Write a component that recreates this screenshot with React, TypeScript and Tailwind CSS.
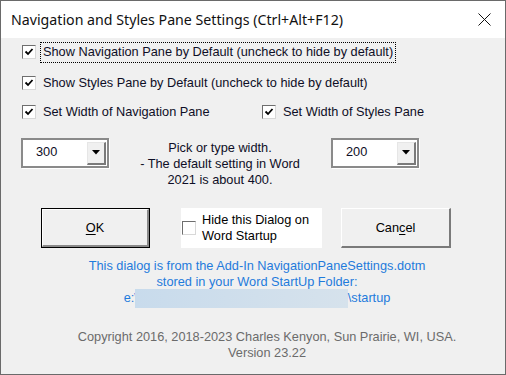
import type { ReactNode } from 'react'

const body = { fontFamily: '"Liberation Sans", Arial, sans-serif' }

function Box({ checked }: { checked?: boolean }) {
  return (
    <span className="inline-flex w-[14px] h-[14px] shrink-0 items-center justify-center bg-white border border-t-[#6e6e6e] border-l-[#6e6e6e] border-b-[#d8d8d8] border-r-[#d8d8d8]">
      {checked && (
        <svg width="10" height="10" viewBox="0 0 10 10">
          <path d="M1.5 4.5 L4 7 L8.5 2" fill="none" stroke="#000" strokeWidth="1.8" />
        </svg>
      )}
    </span>
  )
}

function Check({ children, focus, checked = true }: { children: ReactNode; focus?: boolean; checked?: boolean }) {
  return (
    <div className="flex items-center h-[20px]">
      <Box checked={checked} />
      <span
        className={`ml-[4px] pl-[2px] pr-[2px] h-[21px] flex items-center border border-dotted ${
          focus ? 'border-black' : 'border-transparent'
        }`}
      >
        {children}
      </span>
    </div>
  )
}

function Combo({ value }: { value: string }) {
  return (
    <div className="w-[88px] h-[30px] border-2 border-[#8a8a8a] bg-white flex items-center shadow-[1px_1px_0_#ffffff]">
      <span className="flex-1 pl-[13px] -mt-[3px]">{value}</span>
      <div className="w-[19px] h-[23px] mr-[1px] bg-[#f0f0f0] border-t border-l border-t-[#e6e6e6] border-l-[#e6e6e6] border-b-2 border-r-2 border-b-[#7a7a7a] border-r-[#7a7a7a] flex items-center justify-center">
        <svg width="8" height="5" viewBox="0 0 8 5">
          <path d="M0 0 H8 L4 4.5 Z" fill="#000" />
        </svg>
      </div>
    </div>
  )
}

export default function App() {
  return (
    <div className="w-[506px] h-[375px] border border-[#6a6a6a] bg-[#f0f0f0] flex flex-col overflow-hidden">
      <div className="h-[37px] bg-white flex items-center justify-between pl-[10px] pr-[14px]">
        <span className="text-[14.2px] text-[#111]" style={{ fontFamily: '"Noto Sans", "Open Sans", sans-serif' }}>
          Navigation and Styles Pane Settings (Ctrl+Alt+F12)
        </span>
        <svg width="13" height="13" viewBox="0 0 13 13">
          <path d="M0.5 0.5 L12.5 12.5 M12.5 0.5 L0.5 12.5" stroke="#111" strokeWidth="1" />
        </svg>
      </div>

      <div className="flex flex-col text-[12.75px] text-[#0e0e26] leading-[16px]" style={body}>
        <div className="pl-[21px] mt-[4px]">
          <Check focus>Show Navigation Pane by Default (uncheck to hide by default)</Check>
        </div>
        <div className="pl-[21px] mt-[11px]">
          <Check>Show Styles Pane by Default (uncheck to hide by default)</Check>
        </div>
        <div className="pl-[21px] mt-[9px] flex">
          <div className="w-[240px]">
            <Check>Set Width of Navigation Pane</Check>
          </div>
          <Check>Set Width of Styles Pane</Check>
        </div>

        <div className="mt-[16px] h-[48px] pl-[20px] flex items-start">
          <Combo value="300" />
          <div className="w-[222px] pt-[2px] text-center">
            <div>Pick or type width.</div>
            <div>- The default setting in Word</div>
            <div>2021 is about 400.</div>
          </div>
          <Combo value="200" />
        </div>

        <div className="mt-[22px] h-[40px] pl-[40px] flex items-start">
          <div className="w-[109px] h-[40px] border border-black">
            <div className="w-full h-full bg-[#f0f0f0] border-t border-l border-t-white border-l-white border-b-2 border-r-2 border-b-[#8a8a8a] border-r-[#8a8a8a] flex items-center justify-center text-black">
              <span>
                <span className="underline underline-offset-2">O</span>K
              </span>
            </div>
          </div>
          <div className="ml-[31px] w-[141px] h-[40px] bg-white flex items-center pl-[1px]">
            <Box />
            <div className="ml-[6px] text-black">
              <div>Hide this Dialog on</div>
              <div>Word Startup</div>
            </div>
          </div>
          <div className="ml-[19px] w-[110px] h-[40px] bg-[#f0f0f0] border-t border-l border-t-white border-l-white border-b-2 border-r-2 border-b-[#7a7a7a] border-r-[#7a7a7a] flex items-center justify-center text-black">
            <span>
              Can<span className="underline underline-offset-2">c</span>el
            </span>
          </div>
        </div>

        <div className="mt-[10px] text-center text-[#1f7bdc] pl-[8px]">
          <div>This dialog is from the Add-In NavigationPaneSettings.dotm</div>
          <div>stored in your Word StartUp Folder:</div>
          <div className="flex justify-center items-center h-[16px]">
            <span>e:\</span>
            <span className="inline-block w-[213px] h-[19px] -ml-[3px] bg-gradient-to-r from-[#c8dbec] to-[#d6e2ec]" />
            <span>\startup</span>
          </div>
        </div>

        <div className="mt-[23px] text-center text-[#6b6b6b] pl-[28px]">
          <div>Copyright 2016, 2018-2023 Charles Kenyon, Sun Prairie, WI, USA.</div>
          <div>Version 23.22</div>
        </div>
      </div>
    </div>
  )
}
